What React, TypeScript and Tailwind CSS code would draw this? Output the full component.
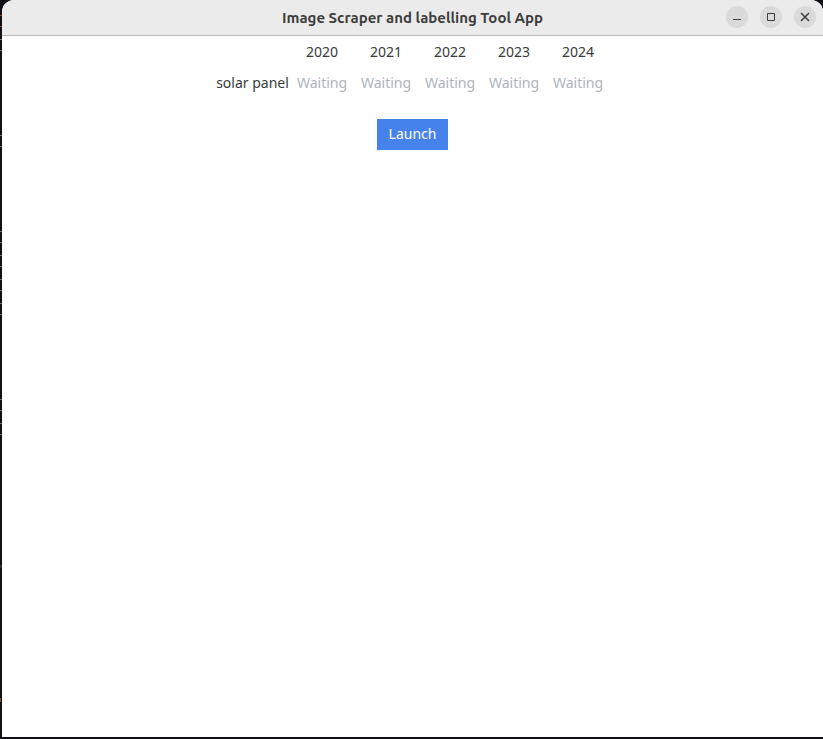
import React from "react";

const years = ["2020", "2021", "2022", "2023", "2024"];

const rows = [
  { label: "solar panel", statuses: ["Waiting", "Waiting", "Waiting", "Waiting", "Waiting"] },
];

function WindowButton({ label, children }: { label: string; children: React.ReactNode }) {
  return (
    <button
      type="button"
      aria-label={label}
      className="flex size-[22px] items-center justify-center rounded-full bg-[#dadada] text-[#3d3d3d]"
    >
      <svg viewBox="0 0 22 22" className="size-[22px]" fill="none" stroke="currentColor" aria-hidden="true">
        {children}
      </svg>
    </button>
  );
}

function TitleBar() {
  return (
    <header className="grid h-9 grid-cols-[1fr_auto_1fr] items-start border-b border-[#b8b8b8] bg-[#ebebeb]">
      <span />
      <h1 className="font-[Ubuntu,'Noto_Sans',sans-serif] text-[15px] leading-9 font-bold text-[#3d3d3d]">
        Image Scraper and labelling Tool App
      </h1>
      <div className="flex justify-end gap-3 pt-1.5 pr-[7px]">
        <WindowButton label="Minimize">
          <path d="M7 13.5h8" />
        </WindowButton>
        <WindowButton label="Maximize">
          <path d="M7.5 7.5h7v7h-7z" />
        </WindowButton>
        <WindowButton label="Close">
          <path d="M7 7l8 8M15 7l-8 8" strokeWidth="1.5" />
        </WindowButton>
      </div>
    </header>
  );
}

/* Edge of the terminal that stays visible behind the window. */
function Backdrop() {
  return (
    <svg className="absolute top-0 left-0 h-[739px] w-0.5" viewBox="0 0 2 739" aria-hidden="true">
      <path
        stroke="#77777f"
        strokeWidth="1"
        d="M0 39.5h2M0 50.5h2M0 135.5h2M0 146.5h2M0 231.5h2M0 242.5h2M0 255.5h2M0 266.5h2M0 279.5h2M0 290.5h2M0 303.5h2M0 314.5h2M0 399.5h2M0 410.5h2M0 423.5h2M0 434.5h2"
      />
      <path stroke="#2b2b31" strokeWidth="3" d="M0 566.5h2" />
      <path stroke="#8a4a20" strokeWidth="1" d="M0 15.5h2M0 26.5h2" />
      <path stroke="#8a4a20" strokeWidth="4" d="M0 700h1" />
    </svg>
  );
}

export default function App() {
  return (
    <div className="relative flex min-h-screen flex-col bg-[#111115] pb-0.5 pl-0.5 font-['Noto_Sans',sans-serif] text-sm text-[#373a3c]">
      <Backdrop />
      <div className="flex grow flex-col overflow-hidden rounded-t-xl bg-white">
        <TitleBar />
        <main className="flex grow flex-col items-center">
          <table className="table-fixed border-collapse">
            <thead>
              <tr className="h-[31px]">
                <td className="w-[75px] p-0" />
                {years.map((year) => (
                  <th key={year} scope="col" className="w-16 p-0 text-center font-normal">
                    {year}
                  </th>
                ))}
              </tr>
            </thead>
            <tbody>
              {rows.map((row) => (
                <tr key={row.label} className="h-[31px]">
                  <th scope="row" className="p-0 text-center font-normal whitespace-nowrap">
                    {row.label}
                  </th>
                  {row.statuses.map((status, i) => (
                    <td key={years[i]} className="w-16 p-0 text-center text-[#adb5bd]">
                      {status}
                    </td>
                  ))}
                </tr>
              ))}
            </tbody>
          </table>
          <button type="button" className="mt-[21px] h-[31px] bg-[#4582ec] px-3 pb-0.5 text-white">
            Launch
          </button>
        </main>
      </div>
    </div>
  );
}
